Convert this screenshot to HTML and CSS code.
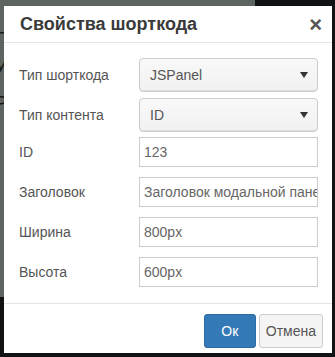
FILE: index.html
```html
<!DOCTYPE html>
<html lang="ru">
<head>
<meta charset="utf-8">
<link rel="stylesheet" href="styles.css">
</head>
<body>
<div class="backdrop">
  <div class="page-panel">
    <span class="frag f1">Н</span>
    <span class="frag f2">У</span>
    <span class="frag f3">Р</span>
  </div>
</div>
<div class="modal">
  <div class="modal-header">
    <h4 class="modal-title">Свойства шорткода</h4>
    <span class="close">×</span>
  </div>
  <div class="modal-body">
    <div class="row sel-row">
      <label class="lbl">Тип шорткода</label>
      <div class="select"><span>JSPanel</span><i class="caret"></i></div>
    </div>
    <div class="row sel-row">
      <label class="lbl">Тип контента</label>
      <div class="select"><span>ID</span><i class="caret"></i></div>
    </div>
    <div class="row">
      <label class="lbl">ID</label>
      <div class="input">123</div>
    </div>
    <div class="row">
      <label class="lbl">Заголовок</label>
      <div class="input">Заголовок модальной панели</div>
    </div>
    <div class="row">
      <label class="lbl">Ширина</label>
      <div class="input">800px</div>
    </div>
    <div class="row">
      <label class="lbl">Высота</label>
      <div class="input">600px</div>
    </div>
  </div>
  <div class="modal-footer">
    <button class="btn btn-primary">Ок</button>
    <button class="btn btn-default">Отмена</button>
  </div>
</div>
</body>
</html>
```
FILE: styles.css
```css
html, body {
  margin: 0;
  padding: 0;
}
body {
  background: #111213;
  width: 335px;
  height: 357px;
  overflow: hidden;
  position: relative;
  font-family: "Liberation Sans", Arial, sans-serif;
}
.backdrop {
  position: absolute;
  inset: 0;
}
.page-panel {
  position: absolute;
  left: 0;
  top: 0;
  width: 255px;
  height: 297px;
  background: #5e6560;
}
.frag {
  position: absolute;
  left: -6px;
  font-size: 20px;
  color: #1a1a1a;
}
.f1 { top: 22px; }
.f2 { top: 56px; }
.f3 { top: 92px; }
.modal {
  position: relative;
  margin: 6px 0 0 4px;
  width: 328px;
  height: 347px;
  background: #fff;
  display: flex;
  flex-direction: column;
}
.modal-header {
  height: 36px;
  border-bottom: 1px solid #e5e5e5;
  display: flex;
  align-items: center;
  justify-content: space-between;
  padding: 0 10px 0 16px;
}
.modal-title {
  margin: 0;
  font-size: 18px;
  font-weight: bold;
  color: #3a3a3a;
}
.close {
  font-size: 22px;
  font-weight: bold;
  color: #555;
  line-height: 1;
  margin-top: 1px;
}
.modal-body {
  padding: 15px 14px 15px 15px;
  display: flex;
  flex-direction: column;
  gap: 10px;
}
.sel-row + .sel-row { margin-top: -4px; }
.sel-row + .row:not(.sel-row) { margin-top: -5px; }
.row {
  display: flex;
  align-items: center;
}
.lbl {
  width: 120px;
  font-size: 14px;
  color: #555;
  margin-top: -1px;
}
.select {
  width: 179px;
  height: 34px;
  box-sizing: border-box;
  border: 1px solid #ccc;
  border-radius: 4px;
  background: linear-gradient(#f9f9f9, #f1f1f1);
  display: flex;
  align-items: center;
  justify-content: space-between;
  padding: 0 9px 0 10px;
  font-size: 14px;
  color: #555;
  box-shadow: inset 0 -1px 0 #ddd;
}
.caret {
  width: 0;
  height: 0;
  border-left: 4px solid transparent;
  border-right: 4px solid transparent;
  border-top: 6px solid #333;
}
.input {
  width: 179px;
  height: 30px;
  box-sizing: border-box;
  border: 1px solid #ccc;
  background: #fff;
  font-size: 14px;
  color: #666;
  padding: 0 4px;
  line-height: 28px;
  white-space: nowrap;
  overflow: hidden;
}
.modal-footer {
  border-top: 1px solid #e5e5e5;
  margin-top: auto;
  padding: 10px 9px 5px 0;
  display: flex;
  justify-content: flex-end;
  gap: 3px;
}
.btn {
  height: 34px;
  box-sizing: border-box;
  font-family: "Liberation Sans", Arial, sans-serif;
  font-size: 14px;
  border-radius: 3px;
  border: 1px solid;
  cursor: pointer;
}
.btn-primary {
  width: 52px;
  background: #337ab7;
  border-color: #2e6da4;
  color: #fff;
}
.btn-default {
  padding: 0 6px;
  background: #f4f4f4;
  border-color: #ccc;
  color: #555;
}
```
